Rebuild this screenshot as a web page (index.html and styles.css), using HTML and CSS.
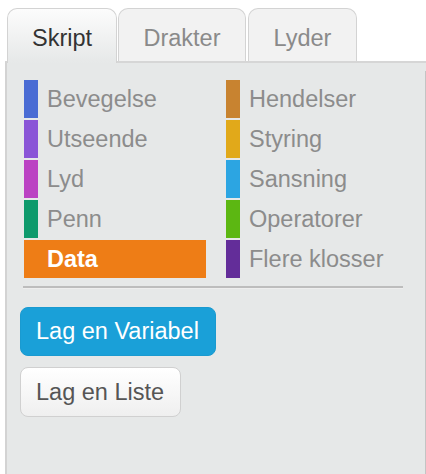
FILE: index.html
```html
<!DOCTYPE html>
<html>
<head>
<meta charset="utf-8">
<link rel="stylesheet" href="styles.css">
</head>
<body>
<div class="app">
  <div class="tabs">
    <div class="tab tab-active tab-skript">Skript</div>
    <div class="tab tab-drakter">Drakter</div>
    <div class="tab tab-lyder">Lyder</div>
  </div>
  <div class="panel">
    <div class="cats">
      <div class="cat"><span class="bar c-motion"></span>Bevegelse</div>
      <div class="cat"><span class="bar c-events"></span>Hendelser</div>
      <div class="cat"><span class="bar c-looks"></span>Utseende</div>
      <div class="cat"><span class="bar c-control"></span>Styring</div>
      <div class="cat"><span class="bar c-sound"></span>Lyd</div>
      <div class="cat"><span class="bar c-sensing"></span>Sansning</div>
      <div class="cat"><span class="bar c-pen"></span>Penn</div>
      <div class="cat"><span class="bar c-operators"></span>Operatorer</div>
      <div class="cat cat-selected"><span class="bar c-data"></span>Data</div>
      <div class="cat"><span class="bar c-more"></span>Flere klosser</div>
    </div>
    <div class="sep"></div>
    <div class="buttons">
      <div class="btn btn-blue">Lag en Variabel</div>
      <div class="btn btn-white">Lag en Liste</div>
    </div>
  </div>
</div>
</body>
</html>
```
FILE: styles.css
```css
html, body {
  margin: 0;
  padding: 0;
  background: #ffffff;
}
body {
  font-family: "Liberation Sans", Arial, sans-serif;
  font-size: 23.5px;
  width: 426px;
  height: 474px;
  overflow: hidden;
}
.app {
  display: flex;
  flex-direction: column;
  height: 474px;
}
.tabs {
  display: flex;
  align-items: flex-start;
  padding: 8px 0 0 7px;
  position: relative;
  z-index: 2;
  height: 61px;
  box-sizing: border-box;
  flex: none;
}
.tab {
  box-sizing: border-box;
  height: 53px;
  border: 1px solid #d3d3d3;
  border-bottom: none;
  border-radius: 10px 10px 0 0;
  background: #f2f2f2;
  color: #8a8a8a;
  text-align: center;
  padding-top: 16px;
  line-height: 26px;
}
.tab-skript { width: 110px; }
.tab-drakter { width: 128px; margin-left: 1px; }
.tab-lyder { width: 109px; margin-left: 2px; }
.tab-active {
  height: 55px;
  background: linear-gradient(#fcfcfc, #e6e8e8);
  color: #333333;
}
.panel {
  flex: 1;
  margin-left: 5px;
  background: #e6e8e8;
  border-left: 2px solid #d3d3d3;
  border-top: 2px solid #d6d6d6;
  padding: 17px 0 0 13px;
  position: relative;
}
.panel::after {
  content: "";
  position: absolute;
  right: 0;
  top: 8px;
  bottom: 0;
  width: 1px;
  background: #c4c4c4;
}
.cats {
  display: grid;
  grid-template-columns: 182px 182px;
  grid-auto-rows: 38px;
  column-gap: 20px;
  row-gap: 2px;
  margin-left: 4px;
}
.cat {
  display: flex;
  align-items: center;
  line-height: 38px;
  color: #8c8c8c;
  white-space: nowrap;
}
.bar {
  width: 14px;
  height: 38px;
  margin-right: 9px;
  flex: none;
}
.cat-selected {
  background: #ee7d16;
  color: #ffffff;
  font-weight: bold;
}
.c-motion { background: #4a6cd4; }
.c-looks { background: #8a55d7; }
.c-sound { background: #bb42c3; }
.c-pen { background: #0e9a6c; }
.c-data { background: #ee7d16; }
.c-events { background: #c88330; }
.c-control { background: #e1a91a; }
.c-sensing { background: #2ca5e2; }
.c-operators { background: #5cb712; }
.c-more { background: #632d99; }
.sep {
  width: 380px;
  margin: 8px 0 0 3px;
  border-top: 2px solid #bdbdbd;
  border-bottom: 1px solid #eeeeee;
}
.buttons {
  display: flex;
  flex-direction: column;
  align-items: flex-start;
  gap: 11px;
  margin-top: 18px;
}
.btn {
  box-sizing: border-box;
  height: 49px;
  line-height: 47px;
  padding: 0 15px;
  border-radius: 8px;
  border: 1px solid transparent;
  white-space: nowrap;
}
.btn-blue {
  width: 196px;
  background: #1aa0d8;
  border-color: #1a9ad0;
  color: #ffffff;
}
.btn-white {
  width: 161px;
  height: 50px;
  line-height: 48px;
  background: linear-gradient(#ffffff, #efefef);
  border-color: #d0d0d0;
  color: #555555;
}
```
